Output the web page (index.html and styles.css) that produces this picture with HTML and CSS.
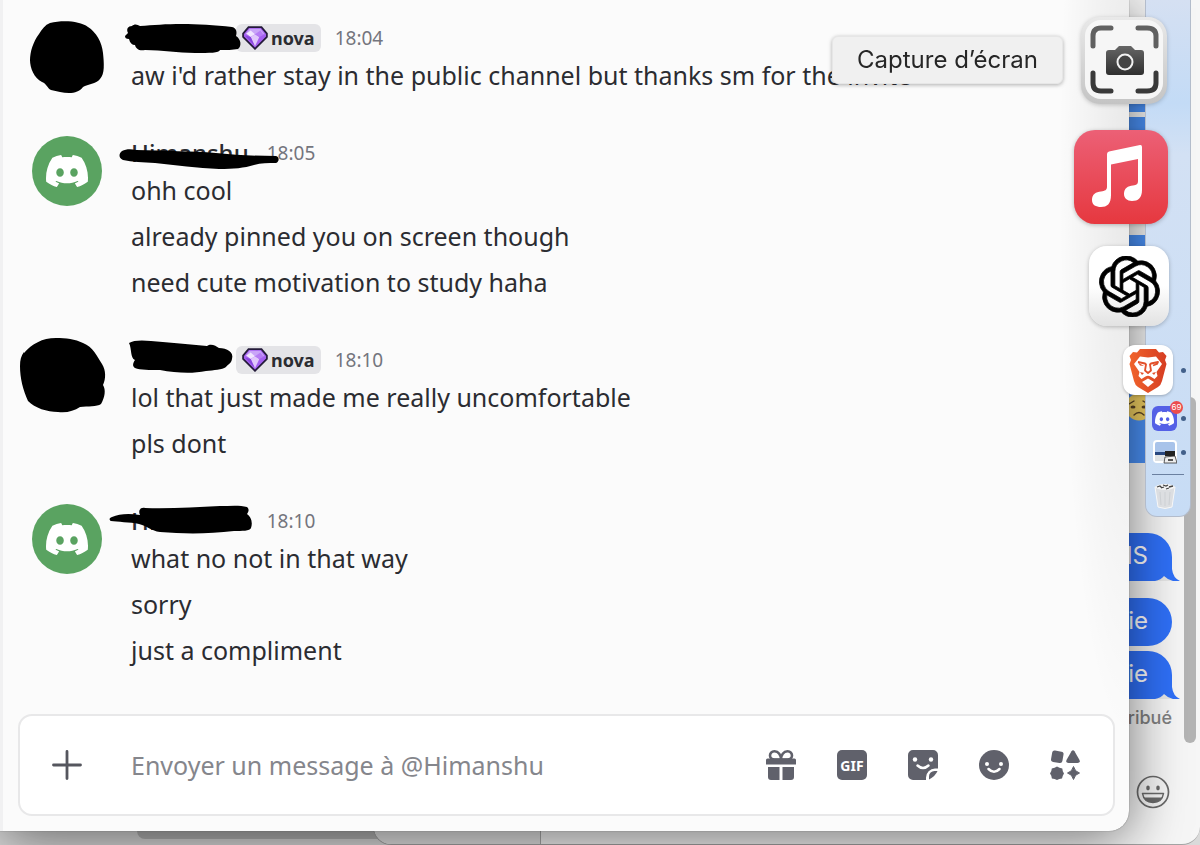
FILE: index.html
```html
<!DOCTYPE html>
<html lang="fr">
<head>
  <meta charset="UTF-8" />
  <meta name="viewport" content="width=device-width, initial-scale=1.0" />
  <title>Messages privés</title>
  <link rel="stylesheet" href="styles.css">
</head>
<body>
  <!-- shared logos and glyphs -->
  <svg class="sprite" aria-hidden="true">
    <symbol id="logo" viewBox="0 0 24 24">
      <path d="M20.317 4.3698a19.7913 19.7913 0 00-4.8851-1.5152.0741.0741 0 00-.0785.0371c-.211.3753-.4447.8648-.6083 1.2495-1.8447-.2762-3.68-.2762-5.4868 0-.1636-.3933-.4058-.8742-.6177-1.2495a.077.077 0 00-.0785-.037 19.7363 19.7363 0 00-4.8852 1.515.0699.0699 0 00-.0321.0277C.5334 9.0458-.319 13.5799.0992 18.0578a.0824.0824 0 00.0312.0561c2.0528 1.5076 4.0413 2.4228 5.9929 3.0294a.0777.0777 0 00.0842-.0276c.4616-.6304.8731-1.2952 1.226-1.9942a.076.076 0 00-.0416-.1057c-.6528-.2476-1.2743-.5495-1.8722-.8923a.077.077 0 01-.0076-.1277c.1258-.0943.2517-.1923.3718-.2914a.0743.0743 0 01.0776-.0105c3.9278 1.7933 8.18 1.7933 12.0614 0a.0739.0739 0 01.0785.0095c.1202.099.246.1981.3728.2924a.077.077 0 01-.0066.1276 12.2986 12.2986 0 01-1.873.8914.0766.0766 0 00-.0407.1067c.3604.698.7719 1.3628 1.225 1.9932a.076.076 0 00.0842.0286c1.961-.6067 3.9495-1.5219 6.0023-3.0294a.077.077 0 00.0313-.0552c.5004-5.177-.8382-9.6739-3.5485-13.6604a.061.061 0 00-.0312-.0286zM8.02 15.3312c-1.1825 0-2.1569-1.0857-2.1569-2.419 0-1.3332.9555-2.4189 2.157-2.4189 1.2108 0 2.1757 1.0952 2.1568 2.419 0 1.3332-.9555 2.4189-2.1569 2.4189zm7.9748 0c-1.1825 0-2.1569-1.0857-2.1569-2.419 0-1.3332.9554-2.4189 2.1569-2.4189 1.2108 0 2.1757 1.0952 2.1568 2.419 0 1.3332-.946 2.4189-2.1568 2.4189Z"/>
    </symbol>
    <symbol id="gem" viewBox="0 0 24 22">
      <path d="M6 1h12l5 6v3L12 21 1 10V7z" fill="#a45ff0" stroke="#241b3a" stroke-width="1.6"/>
      <path d="M7 2.500h10l4 5H3z" fill="#c9a5f8"/>
      <path d="M8 4l4 3.500L8 10 4 7z" fill="#f0e5ff"/>
      <path d="M8 10l4-2.500 4 2.500-4 8.500z" fill="#e0c7fb"/>
      <path d="M12 7.500L17 4l3 4-4 2z" fill="#b67cf5"/>
      <path d="M3 9l5 1 3.500 8z" fill="#8746dc"/>
    </symbol>
  </svg>

  <div class="desktop">
    <!-- windows lying behind the chat -->
    <div class="back-window">
      <div class="scroll-x"></div>
    </div>

    <section class="sms-window">
      <div class="sms-thread">
        <div class="sms-photo first"></div>
        <div class="sms-photo second"></div>
        <div class="sms-photo third"></div>
        <div class="sms-photo emoji">
          <svg viewBox="0 0 28 28" width="28" height="28">
            <circle cx="14" cy="14" r="13.500" fill="#f0cf62"/>
            <ellipse cx="8" cy="14" rx="2.500" ry="1.500" fill="#5b4426"/>
            <ellipse cx="19" cy="14" rx="2.500" ry="1.500" fill="#5b4426"/>
            <path d="M9 22q5-5 10 0M4 11l5-3M18 8l5 3" fill="none" stroke="#5b4426" stroke-width="1.400" stroke-linecap="round"/>
          </svg>
        </div>
        <div class="sms tail apart">SMS</div>
        <div class="sms">Une série</div>
        <div class="sms tail">Une série</div>
        <div class="sms-status">Distribué</div>
      </div>
      <button class="sms-emoji" aria-label="Emoji">
        <svg viewBox="0 0 34 34" width="34" height="34">
          <circle cx="17" cy="17" r="15.500" fill="none" stroke="#6a6a6a" stroke-width="1.700"/>
          <ellipse cx="12" cy="13" rx="1.800" ry="2.400" fill="#6a6a6a"/>
          <ellipse cx="22" cy="13" rx="1.800" ry="2.400" fill="#6a6a6a"/>
          <path d="M6.500 18.500h21c-1 6-5 9-10.500 9s-9.500-3-10.500-9z" fill="none" stroke="#6a6a6a" stroke-width="1.500" stroke-linejoin="round"/>
          <path d="M7.500 22.500h19c-2 3.500-5.500 5-9.500 5s-7.500-1.500-9.500-5z" fill="#6a6a6a"/>
        </svg>
      </button>
      <div class="scroll-y"></div>
    </section>

    <main class="chat-window">
      <div class="messages">
        <article class="message">
          <div class="avatar"></div>
          <div class="body">
            <header>
              <span class="name hidden-name"></span>
              <span class="tag"><svg width="26" height="24"><use href="#gem"/></svg>nova</span>
              <time>18:04</time>
            </header>
            <p>aw i'd rather stay in the public channel but thanks sm for the invite</p>
          </div>
          <svg class="scribble" viewBox="0 0 340 115" width="340" height="115">
            <path d="M50-1c13-3 30-2 38 4 8 5 14 15 15 26 1 10 2 21-3 26-4 5-12 5-17 8-3 4-8 6-14 6s-12-2-18-3c-4-2-4-6-9-8-8-4-12-14-12-22 0-8 3-18 9-26 3-5 6-9 11-11z"/>
            <path d="M125 12l3-3c-2-4 0-7 4-7 2-2 5-2 8 0 13-1 26-2 42-2 15 0 33 1 50 3 5 1 5 6 4 9 5 3 6 10 2 13-5 1-12 1-18 1-1 3-10 3-25 3-18 0-32-3-50-3-6 1-9-1-10-5-3 0-5-2-6-6-3 0-4-1-4-3z"/>
          </svg>
        </article>

        <article class="message">
          <div class="avatar discord"><svg width="42" height="42"><use href="#logo"/></svg></div>
          <div class="body">
            <header>
              <span class="name">Himanshu</span>
              <time>18:05</time>
            </header>
            <p>ohh cool</p>
            <p>already pinned you on screen though</p>
            <p>need cute motivation to study haha</p>
          </div>
          <svg class="scribble" viewBox="0 0 340 115" width="340" height="115">
            <path d="M122 12c4-2 9-2 14-1 30 1 55 1 80 3 20 2 40 3 60 3 4 1 3 6 0 7-8 0-15 0-22 2-10 3-20 4-35 4-22-1-43-4-64-6-12-1-23-1-32-3-5-2-4-7-1-9z"/>
          </svg>
        </article>

        <article class="message">
          <div class="avatar"></div>
          <div class="body">
            <header>
              <span class="name hidden-name"></span>
              <span class="tag"><svg width="26" height="24"><use href="#gem"/></svg>nova</span>
              <time>18:10</time>
            </header>
            <p>lol that just made me really uncomfortable</p>
            <p>pls dont</p>
          </div>
          <svg class="scribble" viewBox="0 0 340 115" width="340" height="115">
            <path d="M24 7C32-2 42-8 56-8c10 0 19 1 27 5 10 4 14 13 19 21 4 6 4 15 1 21 3 5 2 12-2 19-4 3-13 2-21 3-6 4-13 6-22 5-11 0-23-4-30-11-5-11-8-23-8-35 0-6 1-10 4-14z"/>
            <path d="M129-3c4-3 14-3 22-2 20 2 38 3 56 5 4-3 9 0 12 2 8 0 15 4 13 11-1 5-4 5-6 8-4 3-12 3-20 4-14 3-30 2-46-1-10 0-20 0-25-2-3-2-2-5 0-8-5-2-3-11-6-17z"/>
          </svg>
        </article>

        <article class="message">
          <div class="avatar discord"><svg width="42" height="42"><use href="#logo"/></svg></div>
          <div class="body">
            <header>
              <span class="name">Himanshu</span>
              <time>18:10</time>
            </header>
            <p>what no not in that way</p>
            <p>sorry</p>
            <p>just a compliment</p>
          </div>
          <svg class="scribble" viewBox="0 0 340 115" width="340" height="115">
            <path d="M112 10c7-3 16-4 28-2-2-4 0-8 5-7 25 1 50-1 75-2 10 0 20-1 27 1 3 3 1 5 0 7 4 3 6 8 4 14-1 3-9 3-17 3-25 3-50 3-74 1-9-1-12-6-21-8-9-2-22-2-28-3-2-1-2-3 1-4z"/>
          </svg>
        </article>
      </div>

      <form class="composer">
        <button type="button" class="icon-btn add" aria-label="Ajouter">
          <svg viewBox="0 0 30 30" width="30" height="30"><path d="M15 1.500v27M1.500 15h27" stroke="#55565e" stroke-width="2.800" stroke-linecap="round"/></svg>
        </button>
        <input type="text" aria-label="Message" placeholder="Envoyer un message à @Himanshu">
        <div class="tools">
          <button type="button" class="icon-btn" aria-label="Cadeau">
            <svg viewBox="0 0 30 30" width="30" height="30">
              <path d="M2 17h11.500v13H5a3 3 0 0 1-3-3zM16.500 17H28v10a3 3 0 0 1-3 3h-8.500z"/>
              <path d="M1.500 8.500h27A1.500 1.500 0 0 1 30 10v4.500H0V10a1.500 1.500 0 0 1 1.500-1.500z"/>
              <path d="M15 9.500H8.500C5.500 9.500 4 7.500 4 5.500S5.500 1.300 8.500 1.300C12.500 1.300 15 5 15 9.500zM15 9.500h6.500c3 0 4.500-2 4.500-4s-1.500-4.200-4.500-4.200C17.500 1.300 15 5 15 9.500z" fill="none" stroke="#60616b" stroke-width="2.600"/>
            </svg>
          </button>
          <button type="button" class="icon-btn gif" aria-label="GIF">GIF</button>
          <button type="button" class="icon-btn" aria-label="Autocollants">
            <svg viewBox="0 0 30 30" width="30" height="30">
              <path d="M5 0h20a5 5 0 0 1 5 5v13.500h-3a9 9 0 0 0-9 9V30H5a5 5 0 0 1-5-5V5a5 5 0 0 1 5-5z"/>
              <path d="M21 29.500v-3a5.500 5.500 0 0 1 5.500-5.500h3q-2 5-8.500 8.500z"/>
              <g fill="#fff"><circle cx="7" cy="9.500" r="2.200"/><circle cx="23" cy="9.500" r="2.200"/></g>
              <path d="M9.500 15.500q5.500 5 11 0" fill="none" stroke="#fff" stroke-width="2.500" stroke-linecap="round"/>
            </svg>
          </button>
          <button type="button" class="icon-btn" aria-label="Emoji">
            <svg viewBox="0 0 30 30" width="30" height="30">
              <circle cx="15" cy="15" r="15"/>
              <g fill="#fff"><circle cx="8" cy="14" r="2"/><circle cx="22" cy="14" r="2"/></g>
              <path d="M9.500 19q5.500 5.500 11 0" fill="none" stroke="#fff" stroke-width="2.500" stroke-linecap="round"/>
            </svg>
          </button>
          <button type="button" class="icon-btn" aria-label="Applications">
            <svg viewBox="0 0 30 30" width="30" height="30">
              <rect x="1.500" y="1" width="11.500" height="11.500" rx="2.500" transform="rotate(10 7 7)"/>
              <path d="M21.500 1.200q1.500-2 3 0l5 8.800q1 3-2 3h-9q-3 0-2-3z"/>
              <path d="M7 16.500l2.500 1.300 2.800.7.500 2.800 1.200 2.200-1.200 2.300-.8 2.700-2.700.4L7 30l-2.400-1-2.700-.5-.6-2.700L0 23.500l1.300-2.400.5-2.700 2.800-.6z"/>
              <path d="M23.500 16.500q1.300 5.200 6 6.500-4.700 1.300-6 6.500-1.300-5.200-6-6.500 4.700-1.300 6-6.500z" stroke="#60616b" stroke-linejoin="round"/>
            </svg>
          </button>
        </div>
      </form>
    </main>

    <nav class="dock">
      <button class="app capture" aria-label="Capture d’écran">
        <svg viewBox="0 0 88 88" width="88" height="88">
          <defs>
            <linearGradient id="rim" x2="0" y2="1"><stop offset="0" stop-color="#e9e9e9"/><stop offset="1" stop-color="#c4c4c4"/></linearGradient>
            <linearGradient id="ink" x2="0" y2="1"><stop offset="0" stop-color="#666"/><stop offset="1" stop-color="#2f2f2f"/></linearGradient>
          </defs>
          <rect x="1" y="0" width="86" height="87" rx="19" fill="url(#rim)"/>
          <rect x="5" y="3" width="78" height="79" rx="16" fill="#f6f6f6"/>
          <g fill="none" stroke-width="5" stroke-linecap="round">
            <path d="M13 29V19q0-8 8-8h10M58 11h9q9 0 9 8v10" stroke="#606060"/>
            <path d="M13 56v10q0 8 8 8h10M58 74h9q9 0 9-8V56" stroke="#393939"/>
          </g>
          <path d="M29 33h6l4-4h12l4 4h6q3 0 3 3v19q0 3-3 3H29q-3 0-3-3V36q0-3 3-3z" fill="url(#ink)"/>
          <circle cx="45" cy="45" r="7.500" fill="#444" stroke="#f2f2f2" stroke-width="2"/>
        </svg>
        <span class="tooltip">Capture d’écran</span>
      </button>

      <button class="app music" aria-label="Musique">
        <svg viewBox="0 0 94 94" width="94" height="94">
          <defs><linearGradient id="red" x2="0" y2="1"><stop offset="0" stop-color="#ec6076"/><stop offset="1" stop-color="#e6383f"/></linearGradient></defs>
          <rect width="94" height="94" rx="21" fill="url(#red)"/>
          <path d="M33 24q0-2 2-2.500l31-6.500q2-.4 2 2v43c0 8-4 11-10 11-5 0-8-3-8-7 0-6 4-8 9-8.500 4-.500 5-1.500 5-5V29L37 34.500V65c0 9-4 12-10 12-5 0-9-2-9-7 0-6 4-8 9-8.500 4-.500 6-1.500 6-5z" fill="#fff"/>
        </svg>
      </button>

      <button class="app gpt" aria-label="ChatGPT">
        <svg viewBox="0 0 24 24" width="61" height="61"><path d="M22.2819 9.8211a5.9847 5.9847 0 0 0-.5157-4.9108 6.0462 6.0462 0 0 0-6.5098-2.9A6.0651 6.0651 0 0 0 4.9807 4.1818a5.9847 5.9847 0 0 0-3.9977 2.9 6.0462 6.0462 0 0 0 .7427 7.0966 5.98 5.98 0 0 0 .511 4.9107 6.051 6.051 0 0 0 6.5146 2.9001A5.9847 5.9847 0 0 0 13.2599 24a6.0557 6.0557 0 0 0 5.7718-4.2058 5.9894 5.9894 0 0 0 3.9977-2.9001 6.0557 6.0557 0 0 0-.7475-7.0729zm-9.022 12.6081a4.4755 4.4755 0 0 1-2.8764-1.0408l.1419-.0804 4.7783-2.7582a.7948.7948 0 0 0 .3927-.6813v-6.7369l2.02 1.1686a.071.071 0 0 1 .038.052v5.5826a4.504 4.504 0 0 1-4.4945 4.4944zm-9.6607-4.1254a4.4708 4.4708 0 0 1-.5346-3.0137l.142.0852 4.783 2.7582a.7712.7712 0 0 0 .7806 0l5.8428-3.3685v2.3324a.0804.0804 0 0 1-.0332.0615L9.74 19.9502a4.4992 4.4992 0 0 1-6.1408-1.6464zM2.3408 7.8956a4.485 4.485 0 0 1 2.3655-1.9728V11.6a.7664.7664 0 0 0 .3879.6765l5.8144 3.3543-2.0201 1.1685a.0757.0757 0 0 1-.071 0l-4.8303-2.7865A4.504 4.504 0 0 1 2.3408 7.872zm16.5963 3.8558L13.1038 8.364 15.1192 7.2a.0757.0757 0 0 1 .071 0l4.8303 2.7913a4.4944 4.4944 0 0 1-.6765 8.1042v-5.6772a.79.79 0 0 0-.407-.667zm2.0107-3.0231l-.142-.0852-4.7735-2.7818a.7759.7759 0 0 0-.7854 0L9.409 9.2297V6.8974a.0662.0662 0 0 1 .0284-.0615l4.8303-2.7866a4.4992 4.4992 0 0 1 6.6802 4.66zM8.3065 12.863l-2.02-1.1638a.0804.0804 0 0 1-.038-.0567V6.0742a4.4992 4.4992 0 0 1 7.3757-3.4537l-.142.0805L8.704 5.459a.7948.7948 0 0 0-.3927.6813zm1.0976-2.3654l2.602-1.4998 2.6069 1.4998v2.9994l-2.5974 1.4997-2.6067-1.4997Z" stroke="#000" stroke-width=".3"/></svg>
      </button>

      <button class="app brave running" aria-label="Brave">
        <svg viewBox="0 0 40 45" width="40" height="45">
          <defs><linearGradient id="orange"><stop offset="0" stop-color="#f0642c"/><stop offset="1" stop-color="#d63d22"/></linearGradient></defs>
          <path d="M12 1h16l3 3.500 4-.500 3.500 4-1.500 4 1.500 4-4.500 17q-1 4-4 6L20 45l-10-6q-3-2-4-6L1.500 16 3 12 1.500 8 5 4l4 .5z" fill="url(#orange)"/>
          <path d="M12 8.500l8 1 8-1 6 7.500-5.500 8 1 4-3 3-4-2.500q-2.500-1.500-5 0L13.500 31l-3-3 1-4L6 16z" fill="#fff"/>
          <path d="M20 30.500l6 3.500-6 5-6-5z" fill="#fff"/>
          <path d="M10 14l7 1.500 1 1-1 6 3 2.500 3-2.500-1-6 1-1 7-1.500-1 2-4 1.500" fill="none" stroke="#e2502a" stroke-width="1.800" stroke-linejoin="round"/>
          <path d="M10 14.500l6 3.500-4-.500zM12 24l4 1-2 2zM28 24l-4 1 2 2z" fill="#e2502a"/>
        </svg>
      </button>

      <button class="app discord-app running" aria-label="Discord">
        <svg width="19" height="19"><use href="#logo"/></svg>
        <span class="badge">69</span>
      </button>

      <button class="app preview running" aria-label="Aperçu">
        <svg viewBox="0 0 24 24" width="24" height="24">
          <rect x="1" y="1" width="22" height="21" rx="3" fill="#a8c3ea" stroke="#fff" stroke-width="2"/>
          <path d="M2 12h20v3H2z" fill="#28477f"/>
          <path d="M2 15h20v6H2z" fill="#dfe2e4"/>
          <path d="M12 11h10v5H12z" fill="#222"/>
          <path d="M12 17l10-1 2 7H11z" fill="#eee" stroke="#333" stroke-width=".8"/>
          <path d="M15 19h5v2h-5z" fill="#555"/>
        </svg>
      </button>

      <div class="separator"></div>

      <button class="app trash" aria-label="Corbeille">
        <svg viewBox="0 0 22 26" width="22" height="26">
          <path d="M1 4h20l-3 20q-7 3-14 0z" fill="#dcdee1" stroke="#f7f7f7"/>
          <path d="M6 9l1 13M11 9v14M16 9l-1 13" stroke="#cdd0d4"/>
          <ellipse cx="11" cy="4" rx="9.500" ry="3" fill="#f4f4f4"/>
          <path d="M3 4l3-1 2 2M9 2l3 1 2-1M15 4l4-1M7 5l3-1M12 6l3-1" fill="none" stroke="#444" stroke-width="1.300"/>
        </svg>
      </button>
    </nav>
  </div>
</body>
</html>
```
FILE: styles.css
```css
* {
  box-sizing: border-box;
}

body {
  margin: 0;
  font-family: "Noto Sans", sans-serif;
  color: #2b2c31;
}

button {
  border: none;
  background: none;
  padding: 0;
  cursor: pointer;
}

svg {
  display: block;
}

.sprite {
  position: absolute;
  width: 0;
  height: 0;
}

.desktop {
  position: relative;
  height: 100vh;
  overflow: hidden;
  background-color: #dadada;
}

/* windows behind */
.back-window {
  position: absolute;
  left: 0;
  right: 60%;
  bottom: 0;
  height: 40px;
  padding: 0 70px 6px 137px;
  display: flex;
  align-items: flex-end;
}

.scroll-x {
  flex: 1;
  height: 20px;
  border-radius: 8px;
  background-color: #b4b4b4;
}

.sms-window {
  position: absolute;
  top: 0;
  right: 0;
  bottom: 0;
  left: 373px;
  overflow: hidden;
  background-color: #f6f6f6;
  border: 1px solid #a5a5a5;
  border-top: none;
  border-right: none;
  border-radius: 0 0 18px 18px;
  font-family: Inter, sans-serif;
}

.sms-window::before {
  content: "";
  position: absolute;
  left: 0;
  top: 0;
  bottom: 0;
  width: 166px;
  background-color: #e4e4e4;
  border-right: 1px solid #aaa;
}

.sms-thread {
  display: flex;
  flex-direction: column;
  align-items: flex-end;
  padding: 104px 28px 0 0;
}

.sms-photo {
  width: 200px;
  margin-right: 10px;
  background-color: #4a90f5;
}

.first {
  height: 8px;
  margin-bottom: 5px;
}

.second {
  height: 80px;
  margin-bottom: 38px;
}

.third {
  height: 50px;
  margin-bottom: 106px;
}

.emoji {
  height: 72px;
  margin-bottom: 70px;
  padding: 2px 0 0 163px;
}

.sms {
  position: relative;
  height: 48px;
  margin-bottom: 5px;
  padding: 0 24px 0 20px;
  border-radius: 24px;
  background-color: #2f70f8;
  color: #fff;
  font-size: 24px;
  line-height: 46px;
}

.sms.apart {
  margin-bottom: 17px;
}

.sms.tail {
  border-bottom-right-radius: 0;
}

.sms.tail::before,
.sms.tail::after {
  content: "";
  position: absolute;
  bottom: 0;
}

.sms.tail::before {
  right: -8px;
  width: 8px;
  height: 12px;
  background-color: #2f70f8;
  clip-path: path("M0 0Q1 9 8 12H0Z");
}

.sms.tail::after {
  right: -1px;
  width: 18px;
  height: 5px;
  background-color: #e6e6e6;
  clip-path: path("M0 5Q6 4 9 0Q13 4 18 5Z");
}

.sms-status {
  font-size: 18px;
  font-weight: 500;
  line-height: 28px;
  color: #808080;
}

.sms-emoji {
  position: absolute;
  right: 30px;
  bottom: 35px;
}

.scroll-y {
  position: absolute;
  top: 397px;
  right: 4px;
  bottom: 101px;
  width: 12px;
  border-radius: 6px;
  background-color: #b4b4b4;
}

/* chat window */
.chat-window {
  position: absolute;
  top: 0;
  left: 0;
  right: 71px;
  bottom: 14px;
  display: flex;
  flex-direction: column;
  background: radial-gradient(ellipse 70px 560px at 100% 180px, rgba(0, 0, 0, 0.08), transparent) #fbfbfb;
  border-bottom-right-radius: 20px;
  box-shadow: inset 3px 0 #f1f1f2, 0 0 1px #444, 0 8px 56px rgba(0, 0, 0, 0.55);
}

.messages {
  flex: 1;
  padding: 24px 32px 0;
}

.message {
  position: relative;
  display: flex;
  gap: 29px;
  margin-bottom: 41px;
}

.avatar {
  flex: none;
  width: 70px;
  height: 70px;
  margin-top: -3px;
  border-radius: 50%;
  display: flex;
  align-items: center;
  justify-content: center;
}

.avatar.discord {
  background-color: #5aa361;
  fill: #fff;
}

.body header {
  display: flex;
  align-items: center;
  height: 28px;
}

.name {
  font-size: 24px;
  font-weight: 500;
  line-height: 28px;
  margin-right: 18px;
}

.hidden-name {
  width: 105px;
  margin-right: 0;
}

.tag {
  display: flex;
  align-items: center;
  gap: 3px;
  height: 28px;
  padding: 0 6px;
  margin-right: 14px;
  border-radius: 6px;
  background-color: #e4e4e7;
  font-size: 18px;
  font-weight: 700;
}

time {
  font-size: 19px;
  color: #74757d;
}

.body p {
  margin: 0;
  font-size: 25px;
  line-height: 46px;
}

.scribble {
  position: absolute;
  left: -32px;
  top: 0;
  overflow: visible;
}

.message .scribble {
  left: 0;
  margin-left: -32px;
}

.composer {
  display: flex;
  align-items: center;
  height: 102px;
  margin: 0 14px 15px 18px;
  padding: 0 33px 0 32px;
  background-color: #fff;
  border: 2px solid #e8e8e9;
  border-radius: 14px;
}

.composer input {
  flex: 1;
  min-width: 0;
  margin-left: 49px;
  padding: 0;
  border: none;
  outline: none;
  background: none;
  font-family: inherit;
  font-size: 25px;
  line-height: 34px;
}

.composer input::placeholder {
  color: #85868c;
  opacity: 1;
}

.tools {
  display: flex;
  gap: 41px;
}

.icon-btn {
  width: 30px;
  height: 30px;
  fill: #60616b;
}

.gif {
  border-radius: 5px;
  background-color: #60616b;
  color: #fff;
  font-family: "Noto Sans", sans-serif;
  font-size: 14px;
  font-weight: 700;
}

/* dock */
.dock {
  position: absolute;
  top: 0;
  right: 9px;
  width: 46px;
  height: 517px;
  padding-top: 17px;
  display: flex;
  flex-direction: column;
  align-items: flex-end;
  background: linear-gradient(#d5e0f2, #c3dbf6 20%, #d3e1f4 30%, #c7dcf5);
  border: 1px solid #b3bccb;
  border-top: none;
  border-radius: 0 0 12px 12px;
}

.app {
  position: relative;
  flex: none;
  display: flex;
  align-items: center;
  justify-content: center;
}

.capture {
  margin: 0 22px 25px 0;
  filter: drop-shadow(0 1px 2px rgba(0, 0, 0, 0.2));
}

.music {
  margin: 0 22px 22px 0;
  filter: drop-shadow(0 1px 2px rgba(0, 0, 0, 0.25));
}

.gpt {
  width: 80px;
  height: 80px;
  margin: 0 21px 19px 0;
  border-radius: 18px;
  background: linear-gradient(#fff 50%, #e2e2e2);
  box-shadow: 0 1px 4px rgba(0, 0, 0, 0.25);
}

.brave {
  width: 50px;
  height: 50px;
  margin: 0 17px 11px 0;
  border-radius: 12px;
  background-color: #fff;
  box-shadow: 0 1px 3px rgba(0, 0, 0, 0.25);
}

.discord-app {
  width: 25px;
  height: 25px;
  margin: 0 13px 9px 0;
  border-radius: 6px;
  background-color: #5460e6;
  fill: #fff;
}

.preview {
  margin: 0 13px 10px 0;
}

.running::after {
  content: "";
  position: absolute;
  right: -9px;
  width: 5px;
  height: 5px;
  border-radius: 50%;
  background-color: #42608a;
}

.brave.running::after {
  right: -13px;
}

.badge {
  position: absolute;
  top: -5px;
  right: -6px;
  width: 13px;
  height: 13px;
  border-radius: 50%;
  background-color: #ec4c4c;
  color: #fff;
  font-family: Inter, sans-serif;
  font-size: 8px;
  line-height: 13px;
}

.separator {
  width: 32px;
  height: 1px;
  margin: 0 6px 8px 0;
  background-color: #6b80a0;
}

.trash {
  margin-right: 14px;
}

.tooltip {
  position: absolute;
  right: 105px;
  top: 19px;
  height: 48px;
  padding: 0 24px;
  border: 1px solid #e6e6e6;
  border-radius: 6px;
  background-color: #f0f0f0;
  box-shadow: 0 1px 4px rgba(0, 0, 0, 0.12);
  color: #262626;
  font-family: Inter, sans-serif;
  font-size: 24px;
  line-height: 46px;
  white-space: nowrap;
}
```
